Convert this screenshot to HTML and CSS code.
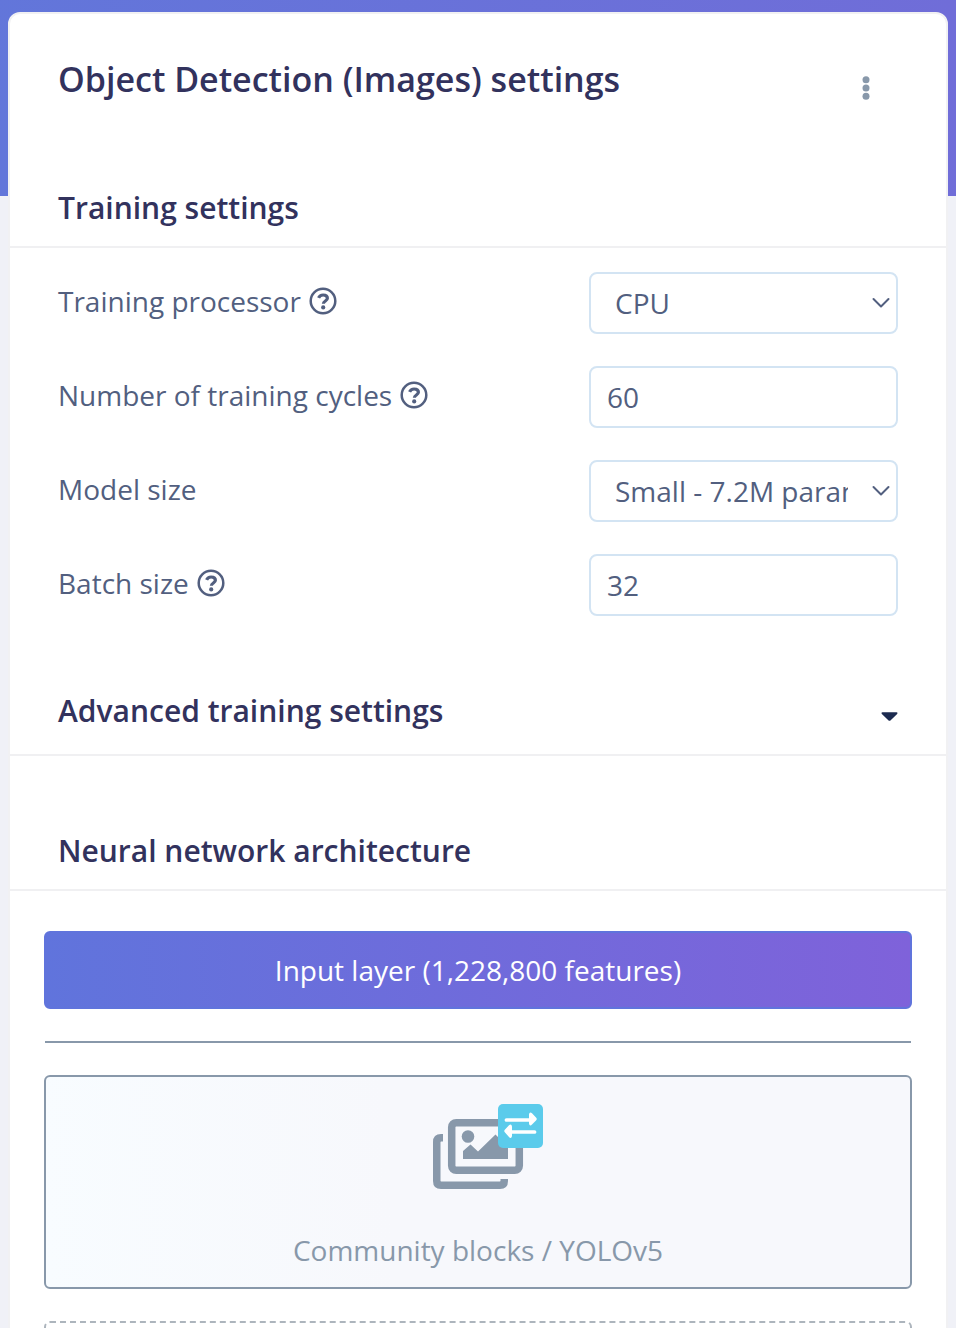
FILE: index.html
```
<!DOCTYPE html>
<html lang="en">
<head>
<meta charset="utf-8">
<meta name="viewport" content="width=device-width, initial-scale=1">
<title>Object Detection (Images) settings</title>
<link rel="stylesheet" href="styles.css">
</head>
<body>
<svg class="sprite" aria-hidden="true">
  <symbol id="help" viewBox="0 0 28 28">
    <circle cx="14" cy="14" r="12.3" fill="none" stroke="currentColor" stroke-width="2.5"/>
    <path d="M9.600 10.900C10.400 9 12 8 14.100 8c2.500 0 4.300 1.300 4.300 3.300 0 2.700-4 2.700-4 5.400" fill="none" stroke="currentColor" stroke-width="3.200"/>
    <circle cx="14.200" cy="20.400" r="2.100" fill="currentColor"/>
  </symbol>
  <symbol id="chevron" viewBox="0 0 18 12">
    <path d="M1.500 2 9 9.500 16.500 2" fill="none" stroke="currentColor" stroke-width="2" stroke-linecap="round" stroke-linejoin="round"/>
  </symbol>
</svg>
<main class="page">
  <section class="card">
    <header class="card-header">
      <h1 class="title">Object Detection (Images) settings</h1>
      <button class="menu-button" type="button" aria-label="More options">
        <svg width="8" height="24" viewBox="0 0 8 24" fill="currentColor"><circle cx="4" cy="3.700" r="3.500"/><circle cx="4" cy="12" r="3.500"/><circle cx="4" cy="20.300" r="3.500"/></svg>
      </button>
    </header>

    <h2 class="section-title">Training settings</h2>
    <form class="settings">
      <div class="row">
        <div class="label"><label for="processor">Training processor</label><svg class="help"><use href="#help"/></svg></div>
        <div class="field">
          <select class="control select" id="processor"><option>CPU</option></select>
          <svg class="chevron"><use href="#chevron"/></svg>
        </div>
      </div>
      <div class="row">
        <div class="label"><label for="cycles">Number of training cycles</label><svg class="help"><use href="#help"/></svg></div>
        <div class="field"><input class="control" id="cycles" type="text" value="60"></div>
      </div>
      <div class="row">
        <div class="label"><label for="model">Model size</label></div>
        <div class="field">
          <select class="control select" id="model"><option>Small - 7.2M params</option></select>
          <svg class="chevron"><use href="#chevron"/></svg>
        </div>
      </div>
      <div class="row">
        <div class="label"><label for="batch">Batch size</label><svg class="help"><use href="#help"/></svg></div>
        <div class="field"><input class="control" id="batch" type="text" value="32"></div>
      </div>
    </form>

    <h2 class="section-title advanced">
      <button class="toggle" type="button" aria-expanded="false">
        <span>Advanced training settings</span>
        <svg width="17" height="10" viewBox="0 0 18 10"><path d="M1.500 0h15c1 0 1.300 1 .6 1.700L10 8.600c-.6.6-1.400.6-2 0L.9 1.700C.2 1 .5 0 1.500 0z" fill="#1c2b50"/></svg>
      </button>
    </h2>

    <h2 class="section-title network">Neural network architecture</h2>
    <div class="layers">
      <button class="input-layer" type="button">Input layer (1,228,800 features)</button>
      <hr class="divider">
      <button class="block" type="button">
        <svg width="110" height="88" viewBox="0 0 110 88">
          <path d="M10 31v7.500H8.200q-.7 0-.7.700V77.800q0 .7.700.7H66.800q.7 0 .7-.7V76H75v2q0 8-8 8H8q-8 0-8-8V39q0-8 8-8z" fill="#8898aa"/>
          <rect x="18.700" y="19.700" width="67.600" height="47.600" rx="4.500" fill="none" stroke="#8898aa" stroke-width="7.500"/>
          <circle cx="35" cy="33.500" r="6.300" fill="#8898aa"/>
          <path d="M30 56v-8l7.500-6.500 7.500 7L62.500 31.500 75 44v12z" fill="#8898aa"/>
          <rect x="65" y="1" width="45" height="44" rx="5" fill="#5bcbeb"/>
          <path d="M73.500 15.200H96V12c0-2.500 1.500-3.300 3-1.700l4 4.100c1 1 1 2.200 0 3.200l-4 4c-1.500 1.600-3 .8-3-1.500v-1.300H73.500c-2.500 0-2.500-3.600 0-3.600zM101.500 27.200H79V24c0-2.500-1.500-3.300-3-1.700l-4 4.100c-1 1-1 2.200 0 3.200l4 4.500c1.500 1.600 3 .8 3-1.500v-1.800h22.500c2.500 0 2.500-3.600 0-3.600z" fill="#fff"/>
        </svg>
        <span>Community blocks / YOLOv5</span>
      </button>
      <div class="drop-slot"></div>
    </div>
  </section>
</main>
</body>
</html>
```
FILE: styles.css
```
* { box-sizing: border-box; }
body {
  margin: 0;
  font-family: "Open Sans", sans-serif;
  font-size: 28px;
  line-height: 42px;
  color: #525f7f;
  background: #f0f1f7;
}
button, input, select { font: inherit; color: inherit; }
.sprite { display: none; }
.page {
  height: 100vh;
  overflow: hidden;
  padding: 12px 8px 0;
  background: linear-gradient(87deg, #6276da, #706dd8) 0 0 / 100% 196px no-repeat;
}
.card {
  background: #fff;
  border: 2px solid #f1f1f3;
  border-radius: 12px;
}
.card-header {
  display: flex;
  justify-content: space-between;
  padding: 42px 48px 0;
  height: 168px;
}
.title {
  margin: 0;
  font-size: 34px;
  line-height: 46px;
  font-weight: 600;
  color: #32325d;
}
.menu-button {
  display: flex;
  align-items: center;
  justify-content: center;
  width: 64px;
  height: 64px;
  padding: 0;
  border: 0;
  background: none;
  color: #8898aa;
}
.section-title {
  margin: 0;
  padding: 4px 48px 16px;
  border-bottom: 2px solid #f0f0f2;
  font-size: 30px;
  line-height: 44px;
  font-weight: 600;
  color: #32325d;
}
.settings {
  display: flex;
  flex-direction: column;
  gap: 32px;
  padding: 24px 48px 0;
}
.row {
  display: grid;
  grid-template-columns: 1fr 309px;
  align-items: center;
}
.label {
  display: flex;
  align-items: center;
  gap: 8px;
  padding-bottom: 4px;
}
.help { width: 28px; height: 28px; }
.field { position: relative; }
.control {
  display: block;
  width: 100%;
  height: 62px;
  padding: 0 16px;
  border: 2px solid #d3e4f3;
  border-radius: 8px;
  background: #fff;
  outline: 0;
}
.select {
  appearance: none;
  padding: 0 48px 0 24px;
}
.chevron {
  position: absolute;
  right: 8px;
  top: 25px;
  width: 18px;
  height: 12px;
  pointer-events: none;
}
.advanced { padding-top: 73px; padding-bottom: 21px; }
.toggle {
  display: flex;
  justify-content: space-between;
  align-items: center;
  width: 100%;
  padding: 0;
  border: 0;
  background: none;
}
.toggle svg { margin-top: 12px; }
.network { padding-top: 73px; }
.layers {
  display: flex;
  flex-direction: column;
  gap: 32px;
  padding: 40px 34px 0;
}
.input-layer {
  height: 78px;
  border: 2px solid #6074dc;
  border-radius: 6px;
  background: linear-gradient(87deg, #6074dc, #7f62da);
  color: #fff;
}
.divider {
  width: calc(100% - 2px);
  margin: 0 auto;
  border: 0;
  border-top: 2px solid #8898aa;
}
.block {
  display: flex;
  flex-direction: column;
  align-items: center;
  justify-content: space-between;
  height: 214px;
  padding: 26px 0 16px;
  border: 2px solid #8898aa;
  border-radius: 6px;
  background: linear-gradient(87deg, #f8fcff, #f7f8fc 40%);
  color: #8898aa;
}
.block svg { margin-left: 20px; }
.drop-slot {
  height: 120px;
  border: 2px dashed #adb5bd;
  border-radius: 6px;
}
```
